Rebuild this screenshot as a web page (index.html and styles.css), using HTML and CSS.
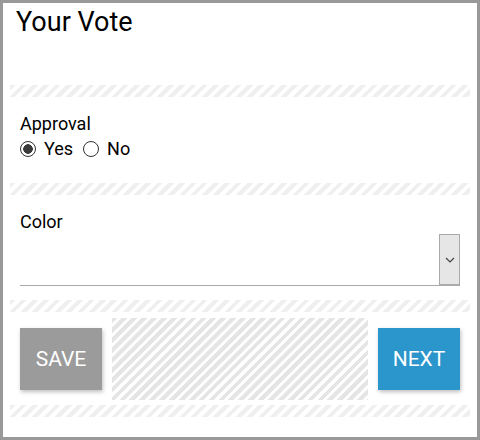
FILE: index.html
```html
<!DOCTYPE html>
<html>
<head>
    <title>Your Vote</title>
    <link rel="stylesheet" href="styles.css">
</head>
<body>
    <div class="frame">
        <div class="title-block">
            <h1>Your Vote</h1>
        </div>
        <div class="spacer"></div>

        <div class="field approval">
            <div class="label">Approval</div>
            <div class="choices">
                <label class="choice"><input type="radio" name="approval" checked> Yes</label>
                <label class="choice"><input type="radio" name="approval"> No</label>
            </div>
        </div>
        <div class="spacer"></div>

        <div class="field color">
            <div class="label">Color</div>
            <div class="select">
                <div class="select-value"></div>
                <div class="select-btn">
                    <svg width="10" height="6" viewBox="0 0 10 6"><path d="M1 1 L5 5 L9 1" fill="none" stroke="#444" stroke-width="1.2"/></svg>
                </div>
            </div>
        </div>
        <div class="spacer"></div>

        <div class="actions">
            <button class="btn save">SAVE</button>
            <div class="filler"></div>
            <button class="btn next">NEXT</button>
        </div>
        <div class="spacer"></div>
    </div>
</body>
</html>
```

FILE: styles.css
```css
body {
    margin: 0;
    font-family: Roboto, "Liberation Sans", sans-serif;
    color: #000;
    background: #fff;
}

.frame {
    box-sizing: border-box;
    width: 480px;
    height: 440px;
    border: 3px solid #999;
    padding: 0 7px;
}

.title-block {
    height: 82px;
}

h1 {
    margin: 0;
    padding: 4px 0 0 6px;
    font-size: 27px;
    font-weight: 400;
    line-height: 30px;
}

.spacer {
    height: 12px;
    background: repeating-linear-gradient(135deg, #efefef 0 4px, #fff 4px 8px);
}

.field {
    padding: 0 10px;
}

.approval {
    height: 86px;
    padding-top: 16px;
    box-sizing: border-box;
}

.color {
    height: 105px;
    padding-top: 16px;
    box-sizing: border-box;
}

.color .label {
    margin-bottom: 2px;
}

.label {
    font-size: 18px;
    line-height: 21px;
}

.choices {
    display: flex;
    align-items: center;
    margin-top: 3px;
}

.choice {
    display: flex;
    align-items: center;
    font-size: 18px;
    line-height: 24px;
    margin-right: 10px;
}

.choice input {
    appearance: none;
    box-sizing: border-box;
    width: 16px;
    height: 16px;
    margin: 0 8px 0 0;
    border: 1px solid #333;
    border-radius: 50%;
    background: #fff;
}

.choice input:checked {
    border: 1.5px solid #333;
    background: radial-gradient(circle, #3a3a3a 0 4.5px, #fff 5px);
}

.select {
    display: flex;
    height: 51px;
    border-bottom: 1px solid #aaa;
}

.select-value {
    flex: 1;
}

.select-btn {
    box-sizing: border-box;
    width: 21px;
    background: #e6e6e6;
    border: 1px solid #aaa;
    display: flex;
    align-items: center;
    justify-content: center;
}

.actions {
    display: flex;
    align-items: center;
    gap: 10px;
    padding: 6px 10px 5px;
}

.filler {
    flex: 1;
    height: 82px;
    background: repeating-linear-gradient(135deg, #e5e5e5 0 4px, #fff 4px 7px);
}

.btn {
    width: 82px;
    height: 62px;
    border: none;
    color: #fff;
    font-family: Roboto, "Liberation Sans", sans-serif;
    font-size: 21px;
    box-shadow: 1px 2px 4px rgba(0, 0, 0, 0.25);
    cursor: pointer;
}

.save {
    background: #9b9b9b;
}

.next {
    background: #2b96cc;
}
```
